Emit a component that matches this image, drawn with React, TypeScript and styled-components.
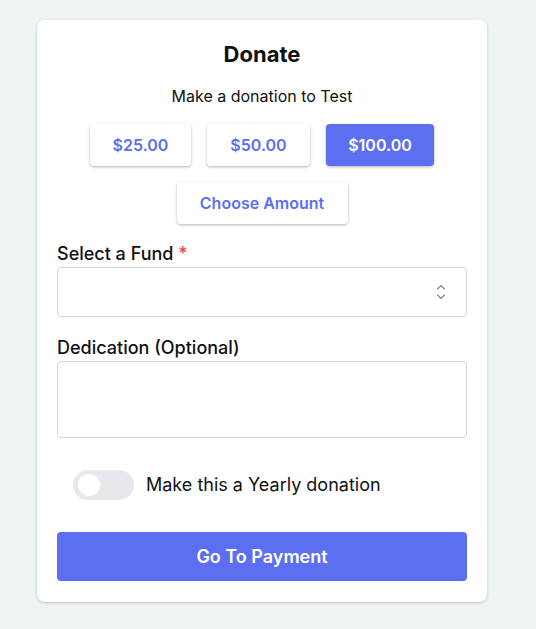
import React, { useState } from "react";
import styled, { createGlobalStyle } from "styled-components";

const GlobalStyle = createGlobalStyle`
  body {
    margin: 0;
    background: #f0f3f4;
    font-family: Inter, "Noto Sans", sans-serif;
    color: #111;
  }
`;

const Page = styled.div`
  padding: 20px 0 27px 37px;
`;

const Card = styled.div`
  width: 450px;
  box-sizing: border-box;
  background: #fff;
  border-radius: 8px;
  box-shadow: 0 1px 3px rgba(60, 80, 100, 0.3);
  padding: 20px 20px 21px;
  display: flex;
  flex-direction: column;
`;

const Title = styled.h2`
  margin: 0;
  font-size: 22px;
  line-height: 28px;
  font-weight: 700;
  text-align: center;
`;

const Subtitle = styled.p`
  margin: 16px 0 0;
  font-size: 16px;
  line-height: 24px;
  text-align: center;
`;

const AmountRow = styled.div`
  display: flex;
  justify-content: center;
  gap: 16px;
  margin-top: 16px;
`;

const AmountButton = styled.button<{ $active?: boolean; $width: number }>`
  width: ${(p) => p.$width}px;
  height: 42px;
  border: none;
  border-radius: 4px;
  font-family: inherit;
  font-size: 16px;
  font-weight: 600;
  cursor: pointer;
  background: ${(p) => (p.$active ? "#5c6ff1" : "#fff")};
  color: ${(p) => (p.$active ? "#fff" : "#5c6ff1")};
  box-shadow: 0 1px 3px rgba(0, 0, 0, 0.3);
`;

const Label = styled.label`
  display: block;
  margin: 18px 0 1px;
  font-size: 18px;
  line-height: 24px;
  font-weight: 500;
`;

const Required = styled.span`
  color: #e5484d;
`;

const SelectBox = styled.div`
  position: relative;
  height: 50px;
  box-sizing: border-box;
  border: 1px solid #d1d5db;
  border-radius: 4px;
  margin-bottom: 1px;
`;

const SelectIcon = styled.svg`
  position: absolute;
  right: 20px;
  top: 16px;
`;

const TextArea = styled.textarea`
  display: block;
  height: 77px;
  box-sizing: border-box;
  border: 1px solid #d1d5db;
  border-radius: 4px;
  resize: none;
  font-family: inherit;
  font-size: 16px;
  margin-top: 0;
`;

const ToggleRow = styled.div`
  display: flex;
  align-items: center;
  gap: 12px;
  margin: 32px 0 0 16px;
`;

const Track = styled.button<{ $on: boolean }>`
  width: 61px;
  height: 30px;
  border: none;
  border-radius: 15px;
  padding: 0;
  background: ${(p) => (p.$on ? "#5c6ff1" : "#e6e8ec")};
  display: flex;
  align-items: center;
  justify-content: ${(p) => (p.$on ? "flex-end" : "flex-start")};
  cursor: pointer;
`;

const Knob = styled.span`
  width: 22px;
  height: 22px;
  border-radius: 50%;
  background: #fff;
  margin: 0 5px;
`;

const ToggleText = styled.span`
  font-size: 18px;
  line-height: 24px;
`;

const PayButton = styled.button`
  margin-top: 32px;
  height: 49px;
  border: none;
  border-radius: 4px;
  background: #5c6ff1;
  color: #fff;
  font-family: inherit;
  font-size: 18px;
  font-weight: 600;
  cursor: pointer;
`;

const amounts = [
  { label: "$25.00", width: 101 },
  { label: "$50.00", width: 103 },
  { label: "$100.00", width: 108 },
];

export default function App() {
  const [selected, setSelected] = useState(2);
  const [yearly, setYearly] = useState(false);

  return (
    <Page>
      <GlobalStyle />
      <Card>
        <Title>Donate</Title>
        <Subtitle>Make a donation to Test</Subtitle>
        <AmountRow>
          {amounts.map((a, i) => (
            <AmountButton key={a.label} $width={a.width} $active={selected === i} onClick={() => setSelected(i)}>
              {a.label}
            </AmountButton>
          ))}
        </AmountRow>
        <AmountRow>
          <AmountButton $width={171} $active={selected === 3} onClick={() => setSelected(3)}>
            Choose Amount
          </AmountButton>
        </AmountRow>
        <Label>
          Select a Fund <Required>*</Required>
        </Label>
        <SelectBox>
          <SelectIcon width="10" height="16" viewBox="0 0 10 16" fill="none" stroke="#8a8f98" strokeWidth="1.3" strokeLinecap="round" strokeLinejoin="round">
            <path d="M1.5 5 L5 1.5 L8.5 5" />
            <path d="M1.5 11 L5 14.5 L8.5 11" />
          </SelectIcon>
        </SelectBox>
        <Label>Dedication (Optional)</Label>
        <TextArea />
        <ToggleRow>
          <Track $on={yearly} onClick={() => setYearly(!yearly)}>
            <Knob />
          </Track>
          <ToggleText>Make this a Yearly donation</ToggleText>
        </ToggleRow>
        <PayButton>Go To Payment</PayButton>
      </Card>
    </Page>
  );
}
